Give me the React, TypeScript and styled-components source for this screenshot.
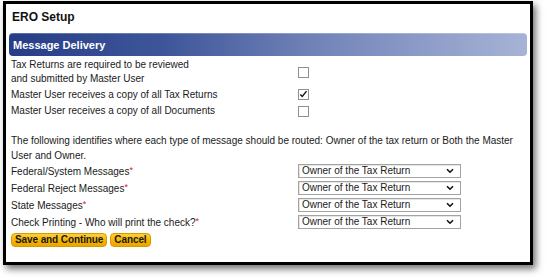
import React from "react";
import styled, { createGlobalStyle } from "styled-components";

const GlobalStyle = createGlobalStyle`
  html, body { margin: 0; padding: 0; background: #ffffff; }
  body { font-family: "Liberation Sans", Arial, sans-serif; color: #1a1a1a; }
`;

const Page = styled.div`
  width: 546px;
  height: 278px;
  padding: 1px 13px 0 3px;
  box-sizing: border-box;
`;

const Frame = styled.div`
  width: 530px;
  height: 264px;
  box-sizing: border-box;
  border: 3px solid #000;
  background: #fff;
  box-shadow: 3px 4px 7px rgba(0, 0, 0, 0.55);
  padding: 0 3px 0 3px;
  display: flex;
  flex-direction: column;
`;

const Title = styled.h1`
  margin: 0;
  font-size: 12px;
  font-weight: bold;
  line-height: 26px;
  height: 29px;
  padding-left: 3px;
  color: #111;
`;

const SectionBar = styled.div`
  height: 23px;
  border-radius: 4px;
  background: linear-gradient(90deg, #263d87 0%, #3e5699 30%, #7384b9 60%, #a7b3d6 100%);
  box-shadow: inset 0 1px 0 rgba(255, 255, 255, 0.25);
  display: flex;
  align-items: center;
  padding-left: 4px;
  color: #fff;
  font-size: 11px;
  font-weight: bold;
`;

const Body = styled.div`
  padding: 2px 0 0 2px;
  font-size: 10px;
  line-height: 14px;
`;

const OptionList = styled.div`
  display: flex;
  flex-direction: column;
  gap: 2px;
`;

const OptionRow = styled.div`
  display: grid;
  grid-template-columns: 287px 1fr;
  align-items: center;
`;

const Box = styled.span<{ $checked?: boolean }>`
  width: 11px;
  height: 11px;
  box-sizing: border-box;
  border: 1px solid #8f8f8f;
  background: #fff;
  display: flex;
  align-items: center;
  justify-content: center;
  margin-top: ${(p) => (p.$checked ? "-1px" : "1px")};
`;

const Intro = styled.p`
  margin: 16px 0 0 0;
  line-height: 14.5px;
`;

const SelectList = styled.div`
  display: flex;
  flex-direction: column;
  gap: 3px;
  margin-top: 0;
`;

const SelectRow = styled.div`
  display: grid;
  grid-template-columns: 287px 163px;
  align-items: center;
  height: 14px;
`;

const Req = styled.span`
  color: #e0112b;
  font-size: 9px;
  vertical-align: 2px;
`;

const Dropdown = styled.div`
  height: 14px;
  box-sizing: border-box;
  border: 1px solid #a3a3a3;
  box-shadow: inset 1px 1px 0 #e6e6e6;
  background: #fff;
  display: flex;
  align-items: center;
  justify-content: space-between;
  padding: 0 6px 0 3px;
  font-size: 10px;
  line-height: 12px;
`;

const Buttons = styled.div`
  display: flex;
  gap: 3px;
  margin-top: 5px;
`;

const Button = styled.button`
  height: 14px;
  box-sizing: border-box;
  border: 1px solid #d99a00;
  border-radius: 4px;
  background: linear-gradient(180deg, #ffcf3a 0%, #f6b400 55%, #eaa500 100%);
  font-family: "Liberation Sans", Arial, sans-serif;
  font-size: 10px;
  font-weight: bold;
  color: #1a1a1a;
  padding: 0 3px;
  line-height: 12px;
  display: flex;
  align-items: center;
  letter-spacing: -0.1px;
`;

const Chevron = () => (
  <svg width="8" height="6" viewBox="0 0 8 6">
    <path d="M1 1.2 L4 4.2 L7 1.2" fill="none" stroke="#111" strokeWidth="1.6" />
  </svg>
);

const Check = () => (
  <svg width="11" height="11" viewBox="0 0 11 11">
    <path d="M1.6 5.4 L4 8 L9.2 1.4" fill="none" stroke="#111" strokeWidth="1.7" />
  </svg>
);

const options = [
  { label: ["Tax Returns are required to be reviewed", "and submitted by Master User"], checked: false },
  { label: ["Master User receives a copy of all Tax Returns"], checked: true },
  { label: ["Master User receives a copy of all Documents"], checked: false },
];

const routes = [
  "Federal/System Messages",
  "Federal Reject Messages",
  "State Messages",
  "Check Printing - Who will print the check?",
];

export default function App() {
  return (
    <>
      <GlobalStyle />
      <Page>
        <Frame>
          <Title>ERO Setup</Title>
          <SectionBar>Message Delivery</SectionBar>
          <Body>
            <OptionList>
              {options.map((o, i) => (
                <OptionRow key={i}>
                  <div>
                    {o.label.map((l, j) => (
                      <div key={j}>{l}</div>
                    ))}
                  </div>
                  <Box $checked={o.checked}>{o.checked && <Check />}</Box>
                </OptionRow>
              ))}
            </OptionList>
            <Intro>
              The following identifies where each type of message should be routed: Owner of the tax return or Both
              the Master
              <br />
              User and Owner.
            </Intro>
            <SelectList>
              {routes.map((r) => (
                <SelectRow key={r}>
                  <span>
                    {r}
                    <Req>*</Req>
                  </span>
                  <Dropdown>
                    <span>Owner of the Tax Return</span>
                    <Chevron />
                  </Dropdown>
                </SelectRow>
              ))}
            </SelectList>
            <Buttons>
              <Button>Save and Continue</Button>
              <Button>Cancel</Button>
            </Buttons>
          </Body>
        </Frame>
      </Page>
    </>
  );
}
